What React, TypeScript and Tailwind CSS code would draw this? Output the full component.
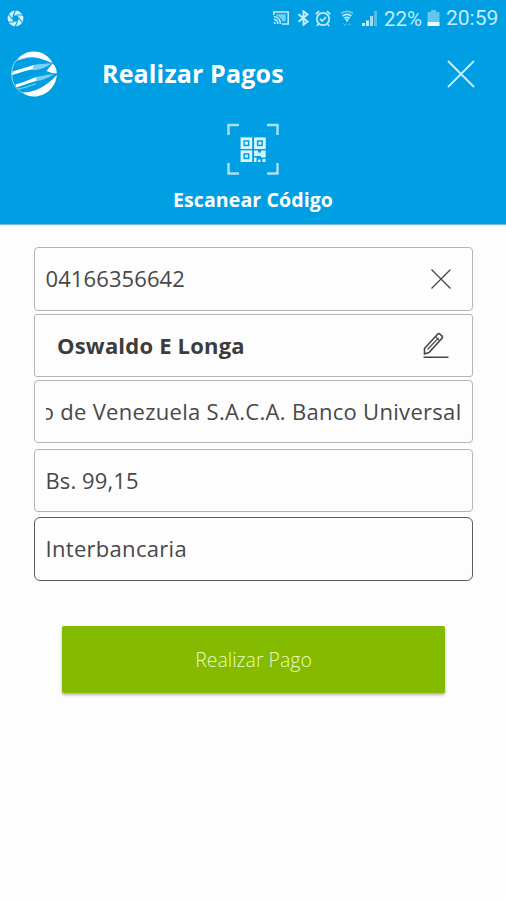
import React from 'react';
import { clsx } from 'clsx';

interface FieldProps {
    children: React.ReactNode;
    className?: string;
}

const StatusBar: React.FC = () => (
    <div className="flex h-9 items-center justify-between pl-[7px] pr-[7px] text-[#c4edfb]">
        <svg className="h-[17px] w-[17px]" viewBox="0 0 17 17" fill="none">
            <circle cx="8.5" cy="8.5" r="5.6" stroke="#d5f2fc" strokeWidth="4.6" />
            <path
                d="M6 6.2 8.6 0M9.5 5l6.5 0M12 8l3.6 5M10.5 11.5 8 17M7 12 1 12M5 9 1.2 3.8"
                stroke="#009fe3"
                strokeWidth="1.1"
            />
        </svg>

        <div className="flex items-center">
            <svg className="h-[14px] w-4" viewBox="0 0 16 14" fill="none" stroke="currentColor" strokeWidth="1.5">
                <path d="M.8 4V1h14.4v12H9" />
                <path d="M3.5 3.3h9.2v7H9.2C8.8 7.8 6 5.2 3.5 5z" fill="currentColor" fillOpacity=".6" stroke="none" />
                <path d="M.8 5.500c4 .3 6.600 3.300 6.600 7.500M.8 8.200c2.500.2 4 2 4 4.800M.8 11.500c.8 0 1.300.6 1.300 1.500" />
            </svg>
            <svg className="ml-2 h-4 w-[13px]" viewBox="0 0 13 16" fill="none" stroke="currentColor" strokeWidth="2">
                <path d="m1.500 4.200 9 7.300-4 3.200V1.300l4 3.200-9 7.300" />
            </svg>
            <svg className="ml-[5px] h-[17px] w-4" viewBox="0 0 16 17" fill="none" stroke="currentColor" strokeWidth="1.700">
                <circle cx="8" cy="9" r="6.200" />
                <path d="m5 8.800 2.200 2.200 3.800-4M.8 4.200l3.400-3M15.200 4.200l-3.400-3M3.500 14l-1.500 2M12.500 14l1.500 2" />
            </svg>
            <svg className="ml-[9px] h-[17px] w-[14px]" viewBox="0 0 14 17" fill="none" stroke="currentColor">
                <path d="M1 3.500c3.500-2.800 8.500-2.800 12 0" strokeWidth="1.700" opacity=".5" />
                <path d="M2.700 6c2.600-2 6-2 8.600 0M4.400 8.300c1.600-1.200 3.600-1.200 5.200 0" strokeWidth="1.800" />
                <path d="M5.800 9.500h2.400L7 11.500z" fill="currentColor" />
                <path d="m3.500 13.500 1.500 2 1.500-2M8 15.500l1.500-2 1.500 2" opacity=".45" />
            </svg>
            <svg className="ml-[7px] h-[17px] w-[17px]" viewBox="0 0 17 17" fill="currentColor">
                <path d="M1 13h3v3H1zM5 10.500h3V16H5z" />
                <path d="M9 6h3v10H9z" opacity=".8" />
                <path d="M13 1h3v15h-3z" opacity=".4" />
            </svg>
            <span className="ml-[6px] w-[41px] pt-[2px] whitespace-nowrap font-[Roboto,sans-serif] text-[20.500px] leading-none">
                22%
            </span>
            <svg className="ml-[2px] h-4 w-[13px]" viewBox="0 0 13 16" fill="currentColor">
                <path d="M4 0h5v2h3.500v10H.5V2H4z" opacity=".5" />
                <path d="M.5 12h12v4H.5z" fill="#e8fafe" />
            </svg>
            <span className="ml-[6px] w-[53px] whitespace-nowrap font-[Roboto,sans-serif] text-[21px] leading-none">
                20:59
            </span>
        </div>
    </div>
);

const BankLogo: React.FC = () => (
    <svg className="h-[46px] w-[48px]" viewBox="0 0 48 46" fill="none">
        <path d="M7 9C11 3.500 17 .5 24 .5c8 0 15 4.500 18.500 11.500C36 10 30 6.200 22 6.200c-5 0-9 1.800-15 2.800z" fill="#fff" />
        <path d="M12 41.500C24 41.500 36 36 46.800 24C46 36 36 45.500 24 45.500c-4.500 0-8.500-1.500-12-4z" fill="#fff" />
        <path d="M6 9.500C0 17 .2 29 6 36.500c1.800 2.300 4 4 6 5" stroke="#8fd8f5" />
        <path d="M6 9.500c5-.8 9-3.300 15-3.500M8 38c6-1 12-3 18-5.500" stroke="#8fd8f5" />
        <path d="M2.500 20.500c8-2.500 14-4 21-6.500l2 3.800C17 19.500 10 21.500 2 24z" fill="#fff" />
        <path d="M5.500 33.500c7-2 13-4.500 20.500-7.500l1.500 3.500C20 32 13 34 6.500 36.500z" fill="#fff" />
        <path d="M23.500 14c6-1 11.500-1.500 18-1.500-5 3-10 6.500-19 6.800zM26 26c6-1 12-2.500 18-3-6 4-11 6.500-17.500 7z" fill="#7bd1f2" />
        <path d="M42.500 12.500 36.500 20c3 1.700 6.500 2.300 10.300 2.300C46.700 18.500 45.500 15 42.500 12.500z" fill="#fff" />
    </svg>
);

const ScanIcon: React.FC = () => (
    <svg className="h-[52px] w-[52px]" viewBox="0 0 52 52" fill="none">
        <path
            d="M1.500 12V2h10.500M40 2h10.500V12M1.500 40v10.500h10.500M40 50.500h10.500V40"
            stroke="#a9e2f7"
            strokeWidth="2.400"
        />
        <g stroke="#d9f5fd" strokeWidth="2.800">
            <rect x="15" y="15.800" width="8.800" height="8.800" />
            <rect x="28.500" y="15.800" width="8.800" height="8.800" />
            <rect x="15" y="28.800" width="8.800" height="8.800" />
        </g>
        <g fill="#d9f5fd">
            <rect x="17.900" y="18.700" width="3" height="3" />
            <rect x="31.400" y="18.700" width="3" height="3" />
            <rect x="17.900" y="31.700" width="3" height="3" />
            <path d="M27 27.500h4v2h3v-2h4.700v7H34V33h-7zM27 34.500h2.500V39H27zM31 36.500h2.500V39H31zM35.500 36h3v3h-3z" />
        </g>
    </svg>
);

const Field: React.FC<FieldProps> = ({ children, className }) => (
    <div
        className={clsx(
            'flex h-[63.500px] items-center overflow-hidden border-[1.500px] px-[10.500px] text-[22px] whitespace-nowrap text-[#484848]',
            className,
        )}
    >
        {children}
    </div>
);

export default function App() {
    return (
        <div className="h-[900px] w-[506px] overflow-hidden bg-[#fdfdfd] font-['Open_Sans',sans-serif]">
            <header className="h-[224px] bg-[#009fe3] text-white shadow-[0_1px_1px_rgba(0,120,170,0.5)]">
                <StatusBar />
                <div className="flex h-[76px] items-center pl-[10px] pr-[31px]">
                    <BankLogo />
                    <h1 className="ml-[44px] text-[25px] font-bold tracking-[0.15px] whitespace-nowrap">Realizar Pagos</h1>
                    <svg className="ml-auto h-7 w-7" viewBox="0 0 28 28" stroke="#c9effc" strokeWidth="1.800">
                        <path d="m1 1 26 26M27 1 1 27" />
                    </svg>
                </div>
                <div className="flex flex-col items-center pt-[11px]">
                    <ScanIcon />
                    <span className="mt-[10px] text-[19.500px] leading-[30px] font-bold tracking-[0.12px]">Escanear Código</span>
                </div>
            </header>

            <main className="flex flex-col pt-[23px] pr-[33px] pl-[34px]">
                <Field className="justify-between rounded-[4px] border-[#b5b5b5] pr-[21px] tracking-[0.1px]">
                    <span>04166356642</span>
                    <svg className="h-5 w-5" viewBox="0 0 20 20" stroke="#484848" strokeWidth="1.300">
                        <path d="m.5.5 19 19M19.500.5.5 19.500" />
                    </svg>
                </Field>
                <Field className="mt-[3px] justify-between rounded-[3px] border-[#b5b5b5] pr-[23px] pl-[22px]">
                    <span className="font-bold tracking-[0.2px] text-[#3c3c3c]">Oswaldo E Longa</span>
                    <svg className="h-[27px] w-[27px]" viewBox="0 0 27 27" fill="none" stroke="#454545" strokeWidth="1.600">
                        <path d="M2.500 22v-5.500L15.500 2.200c.8-.8 1.800-.8 2.600 0l1.700 1.700c.8.8.8 1.800 0 2.600L7 20.500z" />
                        <path d="m13.500 4.500 4.200 4.200M5.500 17.500 16.500 6" strokeWidth="1.100" />
                        <path d="M1.500 25.200h25" strokeWidth="1.500" />
                    </svg>
                </Field>
                <Field className="mt-[2.500px] rounded-[4px] border-[#b5b5b5]">
                    {/* long bank names stay scrolled to their end */}
                    <div className="flex w-full justify-end overflow-hidden">
                        <span className="tracking-[0.3px]">o de Venezuela S.A.C.A. Banco Universal</span>
                    </div>
                </Field>
                <Field className="mt-[5.500px] rounded-[4px] border-[#b5b5b5] tracking-[0.1px]">Bs. 99,15</Field>
                <Field className="mt-[5px] rounded-[6px] border-[#5c5c5c] tracking-[0.3px]">Interbancaria</Field>

                <button className="mx-7 mt-[45px] h-[67px] rounded-[2px] bg-[#84bb00] pt-[2px] text-[19.500px] font-light text-[#eaf8c0] shadow-[0_2px_3px_rgba(0,0,0,0.3)]">
                    Realizar Pago
                </button>
            </main>
        </div>
    );
}
